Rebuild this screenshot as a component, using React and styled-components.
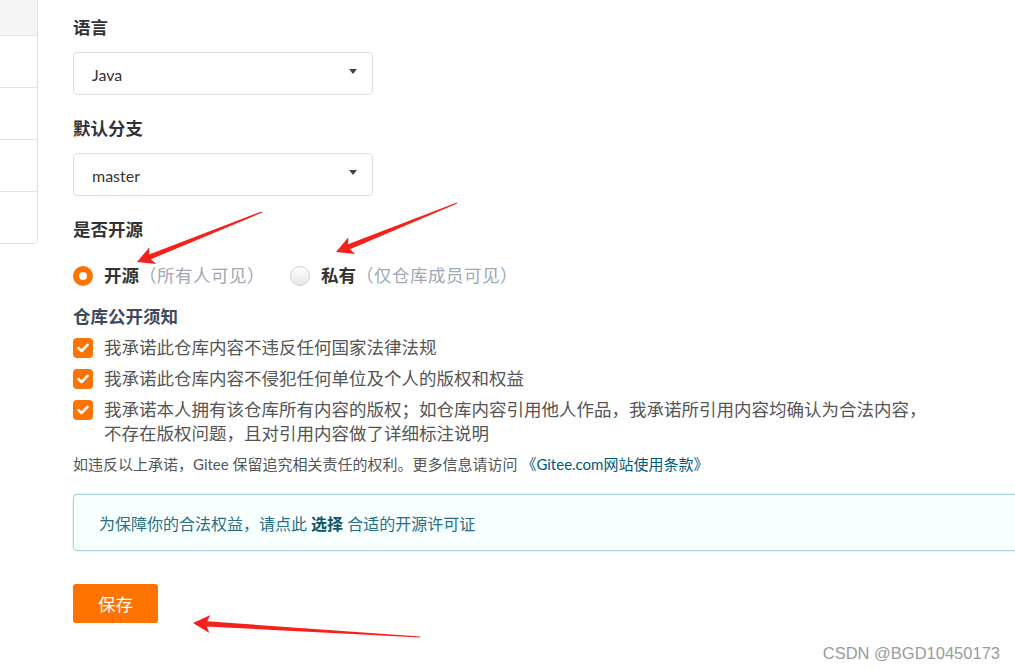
import React from 'react'
import styled, { createGlobalStyle } from 'styled-components'

const GlobalStyle = createGlobalStyle`
    html, body {
        margin: 0;
        padding: 0;
        background: #ffffff;
    }
    body {
        font-family: Lato, "Noto Sans CJK SC", sans-serif;
        text-spacing-trim: space-all;
    }
`;

const CJK = `Lato, "Noto Sans CJK SC", sans-serif`;

function arrowPoints(tip, tail, headLen, headW, shaftW) {
    const dx = tail[0] - tip[0];
    const dy = tail[1] - tip[1];
    const len = Math.hypot(dx, dy);
    const ux = dx / len, uy = dy / len;
    const nx = -uy, ny = ux;
    const bx = tip[0] + ux * headLen, by = tip[1] + uy * headLen;
    const barb = headLen + 3;
    const pts = [
        [tip[0], tip[1]],
        [tip[0] + ux * barb + nx * headW, tip[1] + uy * barb + ny * headW],
        [bx + nx * shaftW, by + ny * shaftW],
        [tail[0] + nx * 0.6, tail[1] + ny * 0.6],
        [tail[0] - nx * 0.6, tail[1] - ny * 0.6],
        [bx - nx * shaftW, by - ny * shaftW],
        [tip[0] + ux * barb - nx * headW, tip[1] + uy * barb - ny * headW],
    ];
    return pts.map(p => p[0].toFixed(1) + ',' + p[1].toFixed(1)).join(' ');
}

const arrows = [
    { tip: [137, 262], tail: [262, 212] },
    { tip: [336, 252], tail: [457, 203] },
    { tip: [193, 623], tail: [420, 637] },
];

function Radio({ checked, title, hint }) {
    return (
        <RadioItem>
            <RadioDot checked={checked} />
            <RadioTitle>{title}</RadioTitle>
            <RadioHint>{hint}</RadioHint>
        </RadioItem>
    )
}

function Check({ children }) {
    return (
        <CheckRow>
            <CheckBox>
                <svg width="12" height="10" viewBox="0 0 12 10">
                    <path d="M1.5 5.2 L4.6 8 L10.5 1.8" fill="none" stroke="#fff" strokeWidth="2.6" strokeLinecap="round" strokeLinejoin="round" />
                </svg>
            </CheckBox>
            <CheckText>{children}</CheckText>
        </CheckRow>
    )
}

function Select({ value }) {
    return (
        <SelectBox>
            <span>{value}</span>
            <Caret />
        </SelectBox>
    )
}

export default function App() {
    return (
        <>
            <GlobalStyle />
            <Page>
                <Sidebar>
                    <SideItem active />
                    <SideItem />
                    <SideItem />
                    <SideItem />
                    <SideItem last />
                </Sidebar>
                <Main>
                    <Label>语言</Label>
                    <Select value="Java" />
                    <Label>默认分支</Label>
                    <Select value="master" />
                    <Label>是否开源</Label>
                    <RadioRow>
                        <Radio checked title="开源" hint="（所有人可见）" />
                        <Radio title="私有" hint="（仅仓库成员可见）" />
                    </RadioRow>
                    <NoticeTitle>仓库公开须知</NoticeTitle>
                    <Check>我承诺此仓库内容不违反任何国家法律法规</Check>
                    <Check>我承诺此仓库内容不侵犯任何单位及个人的版权和权益</Check>
                    <Check>我承诺本人拥有该仓库所有内容的版权；如仓库内容引用他人作品，我承诺所引用内容均确认为合法内容，不存在版权问题，且对引用内容做了详细标注说明</Check>
                    <Footnote>
                        如违反以上承诺，Gitee 保留追究相关责任的权利。更多信息请访问 <Link>《Gitee.com网站使用条款》</Link>
                    </Footnote>
                    <InfoBox>
                        为保障你的合法权益，请点此&nbsp;<strong>选择</strong>&nbsp;合适的开源许可证
                    </InfoBox>
                    <SaveButton>保存</SaveButton>
                </Main>
                <Overlay width="1015" height="670" viewBox="0 0 1015 670">
                    {arrows.map((a, i) => (
                        <polygon key={i} points={arrowPoints(a.tip, a.tail, 14, 9, 2.6)} fill="#f5221b" />
                    ))}
                </Overlay>
                <Watermark>CSDN @BGD10450173</Watermark>
            </Page>
        </>
    )
}

const Page = styled.div`
    position: relative;
    width: 1015px;
    height: 670px;
    overflow: hidden;
    display: flex;
    align-items: flex-start;
    background: #fff;
`;

const Sidebar = styled.div`
    width: 37px;
    flex: none;
    border-right: 1px solid #e3e3e3;
    border-bottom: 1px solid #e3e3e3;
    border-bottom-right-radius: 4px;
    display: flex;
    flex-direction: column;
`;

const SideItem = styled.div`
    height: ${p => p.active ? '35px' : '51px'};
    background: ${p => p.active ? '#f5f5f5' : '#fff'};
    border-bottom: ${p => p.last ? 'none' : '1px solid #e3e3e3'};
    border-bottom-right-radius: ${p => p.last ? '4px' : '0'};
`;

const Main = styled.div`
    flex: none;
    width: 960px;
    margin-left: 35px;
    padding-top: 17px;
    display: flex;
    flex-direction: column;
    align-items: flex-start;
`;

const Label = styled.div`
    font-family: ${CJK};
    font-size: 17.5px;
    line-height: 22px;
    font-weight: 700;
    color: #333;
    margin-bottom: 13px;
`;

const SelectBox = styled.div`
    box-sizing: border-box;
    width: 300px;
    height: 43px;
    border: 1px solid #dedede;
    border-radius: 4px;
    padding: 1px 15px 0 18px;
    margin-bottom: 23px;
    display: flex;
    align-items: center;
    justify-content: space-between;
    font-family: Lato, "Noto Sans CJK SC", sans-serif;
    font-size: 16px;
    color: #333;
`;

const Caret = styled.span`
    width: 0;
    height: 0;
    border-left: 4.5px solid transparent;
    border-right: 4.5px solid transparent;
    border-top: 5px solid #444;
    margin-top: -6px;
`;

const RadioRow = styled.div`
    display: flex;
    align-items: center;
    gap: 25px;
    height: 24px;
    margin-top: 10px;
`;

const RadioItem = styled.div`
    display: flex;
    align-items: center;
`;

const RadioDot = styled.span`
    box-sizing: border-box;
    width: 20px;
    height: 20px;
    border-radius: 50%;
    margin-right: 11px;
    border: ${p => p.checked ? '6px solid #fe7300' : '1px solid #cfd0d2'};
    background: ${p => p.checked ? '#fff' : 'linear-gradient(#ffffff, #e6e6e6)'};
`;

const RadioTitle = styled.span`
    font-family: ${CJK};
    font-size: 17.5px;
    line-height: 24px;
    font-weight: 700;
    color: #333;
`;

const RadioHint = styled.span`
    font-family: ${CJK};
    font-size: 17.5px;
    line-height: 24px;
    letter-spacing: 0.5px;
    color: #a0a7b5;
`;

const NoticeTitle = styled.div`
    font-family: ${CJK};
    font-size: 17.5px;
    line-height: 22px;
    font-weight: 700;
    color: #40485b;
    margin-top: 18px;
    margin-bottom: 1px;
`;

const CheckRow = styled.div`
    display: flex;
    align-items: flex-start;
    margin-top: 7px;
`;

const CheckBox = styled.span`
    flex: none;
    width: 20px;
    height: 20px;
    margin-top: 2px;
    margin-right: 11px;
    border-radius: 4px;
    background: #fe7300;
    display: flex;
    align-items: center;
    justify-content: center;
`;

const CheckText = styled.span`
    max-width: 830px;
    font-family: ${CJK};
    font-size: 17.5px;
    line-height: 24px;
    color: #555;
`;

const Footnote = styled.div`
    margin-top: 8px;
    font-family: ${CJK};
    font-size: 15px;
    line-height: 20px;
    color: #555;
`;

const Link = styled.span`
    color: #005980;
`;

const InfoBox = styled.div`
    box-sizing: border-box;
    width: 960px;
    height: 57px;
    margin-top: 20px;
    padding-left: 25px;
    display: flex;
    align-items: center;
    background: #f8ffff;
    border: 1px solid #a9d5de;
    border-radius: 4px;
    box-shadow: 0 0 0 0.5px rgba(169, 213, 222, 0.5);
    font-family: ${CJK};
    font-size: 16px;
    color: #276f86;

    strong {
        color: #0e566c;
        font-weight: 700;
    }
`;

const SaveButton = styled.button`
    margin-top: 33px;
    width: 85px;
    height: 39px;
    border: none;
    border-radius: 3px;
    background: #fe7300;
    color: #fff;
    font-family: ${CJK};
    font-size: 17.5px;
    cursor: pointer;
`;

const Overlay = styled.svg`
    position: absolute;
    left: 0;
    top: 0;
    pointer-events: none;
`;

const Watermark = styled.div`
    position: absolute;
    right: 15px;
    bottom: 7px;
    font-family: "Liberation Sans", Arial, sans-serif;
    font-size: 16.5px;
    color: #9a9a9a;
`;
